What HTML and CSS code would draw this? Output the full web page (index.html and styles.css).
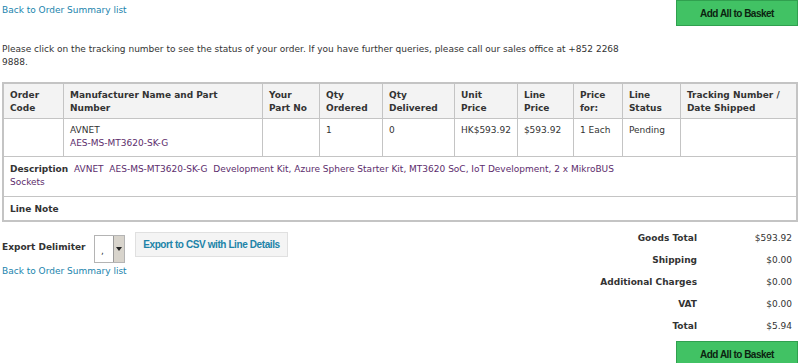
FILE: index.html
```html
<!doctype html>
<html>
    <head>
        <meta charset="utf-8">
        <title>Order Detail</title>
        <meta name="viewport" content="width=device-width, initial-scale=1">
        <link rel="stylesheet" href="styles.css">
    </head>
    <body>
        <div class="top-bar">
            <a class="back-link" href="#">Back to Order Summary list</a>
            <button class="basket-btn">Add All to Basket</button>
        </div>
        <p class="info">Please click on the tracking number to see the status of your order. If you have further queries, please call our sales office at +852 2268 9888.</p>

        <table class="order-lines">
            <tr class="head">
                <th class="c-code">Order<br>Code</th>
                <th class="c-mfr">Manufacturer Name and Part<br>Number</th>
                <th class="c-your">Your<br>Part No</th>
                <th class="c-qo">Qty<br>Ordered</th>
                <th class="c-qd">Qty<br>Delivered</th>
                <th class="c-unit">Unit<br>Price</th>
                <th class="c-line">Line<br>Price</th>
                <th class="c-for">Price<br>for:</th>
                <th class="c-status">Line<br>Status</th>
                <th class="c-track">Tracking Number /<br>Date Shipped</th>
            </tr>
            <tr class="item">
                <td></td>
                <td>AVNET<br><a class="part" href="#">AES-MS-MT3620-SK-G</a></td>
                <td></td>
                <td>1</td>
                <td>0</td>
                <td>HK$593.92</td>
                <td>$593.92</td>
                <td>1 Each</td>
                <td>Pending</td>
                <td></td>
            </tr>
            <tr class="desc">
                <td colspan="10"><div class="desc-box"><b>Description</b>&nbsp; <span class="desc-text">AVNET&nbsp; AES-MS-MT3620-SK-G&nbsp; Development Kit, Azure Sphere Starter Kit, MT3620 SoC, IoT Development, 2 x MikroBUS Sockets</span></div></td>
            </tr>
            <tr class="note">
                <td colspan="10"><b>Line Note</b></td>
            </tr>
        </table>

        <div class="bottom">
            <div class="export">
                <div class="export-row">
                    <b class="export-label">Export Delimiter</b>
                    <div class="select">
                        <span class="select-value">,</span>
                        <span class="select-arrow"></span>
                    </div>
                    <button class="csv-btn">Export to CSV with Line Details</button>
                </div>
                <a class="back-link" href="#">Back to Order Summary list</a>
            </div>
            <div class="summary">
                <table class="totals">
                    <tr><th>Goods Total</th><td>$593.92</td></tr>
                    <tr><th>Shipping</th><td>$0.00</td></tr>
                    <tr><th>Additional Charges</th><td>$0.00</td></tr>
                    <tr><th>VAT</th><td>$0.00</td></tr>
                    <tr><th>Total</th><td>$5.94</td></tr>
                </table>
                <button class="basket-btn">Add All to Basket</button>
            </div>
        </div>
    </body>
</html>
```

FILE: styles.css
```css
body {
    margin: 0 2px;
    font-family: "DejaVu Sans", Verdana, sans-serif;
    font-size: 9px;
    line-height: 13px;
    color: #333;
    background: #fff;
}
a {
    text-decoration: none;
}
.back-link {
    color: #1a84ad;
}
.top-bar {
    display: flex;
    justify-content: space-between;
    align-items: flex-start;
}
.top-bar .back-link {
    margin-top: 4px;
}
.basket-btn {
    width: 122px;
    height: 26px;
    padding: 0;
    background: #41c264;
    border: 1px solid #30a04f;
    color: #0c2410;
    font-family: "Liberation Sans", Arial, sans-serif;
    font-size: 10px;
    font-weight: bold;
    letter-spacing: -0.5px;
}
.info {
    margin: 17px 0 0;
    max-width: 620px;
}
.order-lines {
    width: 796px;
    margin-top: 13px;
    border-collapse: collapse;
    border: 2px solid #c4c4c4;
}
.order-lines th,
.order-lines td {
    border: 1px solid #c4c4c4;
    text-align: left;
    vertical-align: top;
    padding: 0 6px;
    white-space: nowrap;
}
.order-lines .head th {
    height: 29px;
    padding-top: 5px;
    background: #f3f3f3;
    color: #333;
}
.order-lines .item td {
    height: 32px;
    padding-top: 5px;
}
.order-lines .desc td,
.order-lines .note td {
    white-space: normal;
    border-left: 0;
    border-right: 0;
}
.order-lines .desc td {
    height: 33px;
    padding-top: 6px;
}
.desc-box {
    max-width: 612px;
}
.order-lines .note td {
    height: 17px;
    padding-top: 6px;
}
.c-code { width: 47px; }
.c-mfr { width: 186px; }
.c-your { width: 44px; }
.c-qo { width: 50px; }
.c-qd { width: 59px; }
.c-unit { width: 49px; }
.c-line { width: 43px; }
.c-for { width: 36px; }
.c-status { width: 45px; }
.part,
.desc-text {
    color: #5c2c6c;
}
.bottom {
    display: flex;
    justify-content: space-between;
    align-items: flex-start;
    margin-top: 5px;
}
.export-row {
    display: flex;
    align-items: flex-start;
}
.export-label {
    width: 92px;
    margin-top: 14px;
    white-space: nowrap;
}
.select {
    display: flex;
    width: 29px;
    height: 26px;
    margin-top: 8px;
    border: 1px solid #b4b4b4;
    background: #fff;
}
.select-value {
    flex: 1;
    padding: 9px 0 0 6px;
    font-size: 9px;
}
.select-arrow {
    width: 10px;
    background: #d8d4cc;
    border-left: 1px solid #9a9a9a;
    position: relative;
}
.select-arrow::after {
    content: "";
    position: absolute;
    left: 2px;
    top: 11px;
    border-left: 3px solid transparent;
    border-right: 3px solid transparent;
    border-top: 4px solid #222;
}
.csv-btn {
    margin-left: 10px;
    margin-top: 5px;
    width: 153px;
    height: 25px;
    padding: 0;
    background: #f4f4f4;
    border: 1px solid #e0e0e0;
    color: #2083a8;
    font-family: "Liberation Sans", Arial, sans-serif;
    font-size: 10px;
    font-weight: bold;
    letter-spacing: -0.4px;
}
.export .back-link {
    display: block;
    margin-top: 2px;
}
.summary {
    display: flex;
    flex-direction: column;
    align-items: flex-end;
}
.totals {
    border-collapse: collapse;
    margin-right: 6px;
}
.totals th {
    text-align: right;
    height: 22px;
    padding: 0;
    vertical-align: middle;
}
.totals td {
    text-align: right;
    width: 95px;
    padding: 0;
}
.summary .basket-btn {
    margin-top: 4px;
}
```
